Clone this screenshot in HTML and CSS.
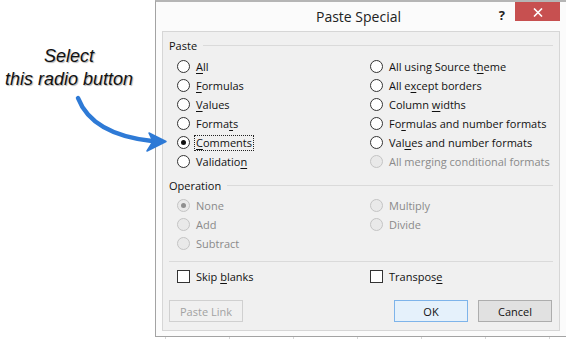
FILE: index.html
```html
<!DOCTYPE html>
<html lang="en">
<head>
    <meta charset="UTF-8">
    <meta name="viewport" content="width=device-width, initial-scale=1.0">
    <title>Paste Special</title>
    <link rel="stylesheet" href="styles.css">
</head>
<body>
    <div class="page">
        <!-- Annotation -->
        <div class="note">
            <div>Select</div>
            <div>this radio button</div>
        </div>

        <div class="window-col">
            <div class="dialog">
                <!-- Title bar -->
                <div class="titlebar">
                    <span></span>
                    <span class="title">Paste Special</span>
                    <div class="controls">
                        <span class="help">?</span>
                        <span class="close">
                            <svg width="10" height="9" viewBox="0 0 10 9">
                                <path d="M1 0.5 L9 8.5 M9 0.5 L1 8.5" stroke="#fff" stroke-width="1.6"/>
                            </svg>
                        </span>
                    </div>
                </div>

                <div class="panel">
                    <!-- Paste group -->
                    <div class="legend">Paste</div>
                    <div class="cols paste-cols">
                        <div class="col">
                            <label class="opt"><span class="radio"></span><span><u>A</u>ll</span></label>
                            <label class="opt"><span class="radio"></span><span><u>F</u>ormulas</span></label>
                            <label class="opt"><span class="radio"></span><span><u>V</u>alues</span></label>
                            <label class="opt"><span class="radio"></span><span>Forma<u>t</u>s</span></label>
                            <label class="opt"><span class="radio checked"></span><span class="focus"><u>C</u>omments</span></label>
                            <label class="opt"><span class="radio"></span><span>Validatio<u>n</u></span></label>
                        </div>
                        <div class="col">
                            <label class="opt"><span class="radio"></span><span>All using Source t<u>h</u>eme</span></label>
                            <label class="opt"><span class="radio"></span><span>All e<u>x</u>cept borders</span></label>
                            <label class="opt"><span class="radio"></span><span>Column <u>w</u>idths</span></label>
                            <label class="opt"><span class="radio"></span><span>Fo<u>r</u>mulas and number formats</span></label>
                            <label class="opt"><span class="radio"></span><span>Val<u>u</u>es and number formats</span></label>
                            <label class="opt disabled"><span class="radio"></span><span>All merging conditional formats</span></label>
                        </div>
                    </div>

                    <!-- Operation group -->
                    <div class="legend op-legend">Operation</div>
                    <div class="cols op-cols">
                        <div class="col">
                            <label class="opt disabled"><span class="radio checked"></span><span>None</span></label>
                            <label class="opt disabled"><span class="radio"></span><span>Add</span></label>
                            <label class="opt disabled"><span class="radio"></span><span>Subtract</span></label>
                        </div>
                        <div class="col">
                            <label class="opt disabled"><span class="radio"></span><span>Multiply</span></label>
                            <label class="opt disabled"><span class="radio"></span><span>Divide</span></label>
                        </div>
                    </div>

                    <div class="separator"></div>

                    <div class="cols check-cols">
                        <label class="opt"><span class="checkbox"></span><span>Skip <u>b</u>lanks</span></label>
                        <label class="opt"><span class="checkbox"></span><span>Transpos<u>e</u></span></label>
                    </div>

                    <!-- Buttons -->
                    <div class="buttons">
                        <button class="btn" disabled>Paste Link</button>
                        <button class="btn default">OK</button>
                        <button class="btn">Cancel</button>
                    </div>
                </div>
            </div>
            <div class="sheet"></div>
        </div>

        <!-- Pointer arrow -->
        <svg class="arrow" width="566" height="339" viewBox="0 0 566 339">
            <path d="M78 98 C 88 124, 115 137, 152 141" fill="none" stroke="#2e7ad6" stroke-width="4.5" stroke-linecap="round"/>
            <path d="M166 141.5 L149 133 L153 141.5 L147 151 Z" fill="#2e7ad6" stroke="#2e7ad6" stroke-width="1.5" stroke-linejoin="round"/>
        </svg>
    </div>
</body>
</html>
```

FILE: styles.css
```css
* {
    box-sizing: border-box;
}

body {
    margin: 0;
    background: #fff;
    font-family: "Open Sans", "Noto Sans", sans-serif;
    font-size: 11px;
    color: #111;
}

.page {
    position: relative;
    display: flex;
    width: 566px;
    height: 339px;
    overflow: hidden;
}

/* Annotation */
.note {
    width: 155px;
    flex: none;
    padding: 45px 17px 0 0;
    text-align: center;
    font-family: "Liberation Sans", Arial, sans-serif;
    font-style: italic;
    font-size: 18px;
    line-height: 23px;
    color: #111;
    text-shadow: 1px 1px 1px rgba(0, 0, 0, 0.3);
}

.arrow {
    position: absolute;
    left: 0;
    top: 0;
    pointer-events: none;
}

/* Dialog window */
.window-col {
    width: 411px;
    flex: none;
    display: flex;
    flex-direction: column;
}

.dialog {
    height: 337px;
    background: #fbfbfb;
    border-top: 2px solid #b5b5b5;
    border-left: 1px solid #a3a3a3;
    border-bottom: 1px solid #a3a3a3;
    padding: 0 6px 5px 6px;
    display: flex;
    flex-direction: column;
}

.sheet {
    flex: 1;
    background-color: #fff;
    background-image: linear-gradient(to right, #d6d6d6 1px, transparent 1px);
    background-size: 64px 100%;
    background-position: 10px 0;
}

.titlebar {
    height: 29px;
    display: grid;
    grid-template-columns: 1fr auto 1fr;
    align-items: start;
    margin-left: -6px;
}

.title {
    font-size: 14px;
    line-height: 29px;
    color: #222;
    padding-left: 1px;
}

.controls {
    display: flex;
    justify-content: flex-end;
    align-items: flex-start;
    gap: 10px;
}

.help {
    font-size: 13px;
    font-weight: bold;
    line-height: 14px;
    margin-top: 6px;
    color: #222;
}

.close {
    width: 45px;
    height: 19px;
    background: #c75050;
    display: flex;
    align-items: center;
    justify-content: center;
    padding-left: 1px;
    padding-top: 1px;
}

.panel {
    flex: 1;
    background: #f0f0f0;
    border: 1px solid #d6d6d6;
    padding: 5px 6px 8px 6px;
    display: flex;
    flex-direction: column;
}

.legend {
    display: flex;
    align-items: center;
    gap: 6px;
    height: 16px;
}

.legend::after {
    content: "";
    flex: 1;
    border-top: 1px solid #dadada;
}

.op-legend {
    margin-top: 6px;
}

.cols {
    display: grid;
    grid-template-columns: 193px 1fr;
    padding-left: 8px;
}

.paste-cols {
    margin-top: 4px;
}

.op-cols {
    margin-top: 3px;
    height: 57px;
}

.check-cols {
    margin-top: 5px;
}

.opt {
    display: flex;
    align-items: center;
    gap: 6px;
    height: 19px;
    white-space: nowrap;
}

.opt u {
    text-underline-offset: 2px;
}

.radio {
    width: 13px;
    height: 13px;
    flex: none;
    border: 1px solid #333;
    border-radius: 50%;
    background: #fff;
    display: flex;
    align-items: center;
    justify-content: center;
}

.radio.checked::after {
    content: "";
    width: 5px;
    height: 5px;
    border-radius: 50%;
    background: #111;
}

.checkbox {
    width: 13px;
    height: 13px;
    flex: none;
    border: 1px solid #333;
    background: #fff;
}

.focus {
    outline: 1px dotted #222;
    outline-offset: 0;
    padding: 0 1px;
    margin-left: -1px;
    line-height: 14px;
}

.disabled {
    color: #8a8a8a;
}

.disabled .radio {
    border-color: #c4c4c4;
    background: #e9e9e9;
}

.disabled .radio.checked::after {
    background: #8f8f8f;
}

.separator {
    margin-top: 8px;
    border-top: 1px solid #dadada;
}

.buttons {
    display: flex;
    gap: 10px;
    margin-top: 14px;
    padding-right: 1px;
}

.btn {
    width: 74px;
    height: 22px;
    font-family: inherit;
    font-size: 11px;
    color: #111;
    background: #e1e1e1;
    border: 1px solid #adadad;
    padding: 0;
}

.btn:first-child {
    margin-right: auto;
}

.btn:disabled {
    color: #a2a2a2;
    background: #f0f0f0;
    border-color: #d0d0d0;
}

.btn.default {
    background: #e5f1fb;
    border-color: #7eb4ea;
}
```
